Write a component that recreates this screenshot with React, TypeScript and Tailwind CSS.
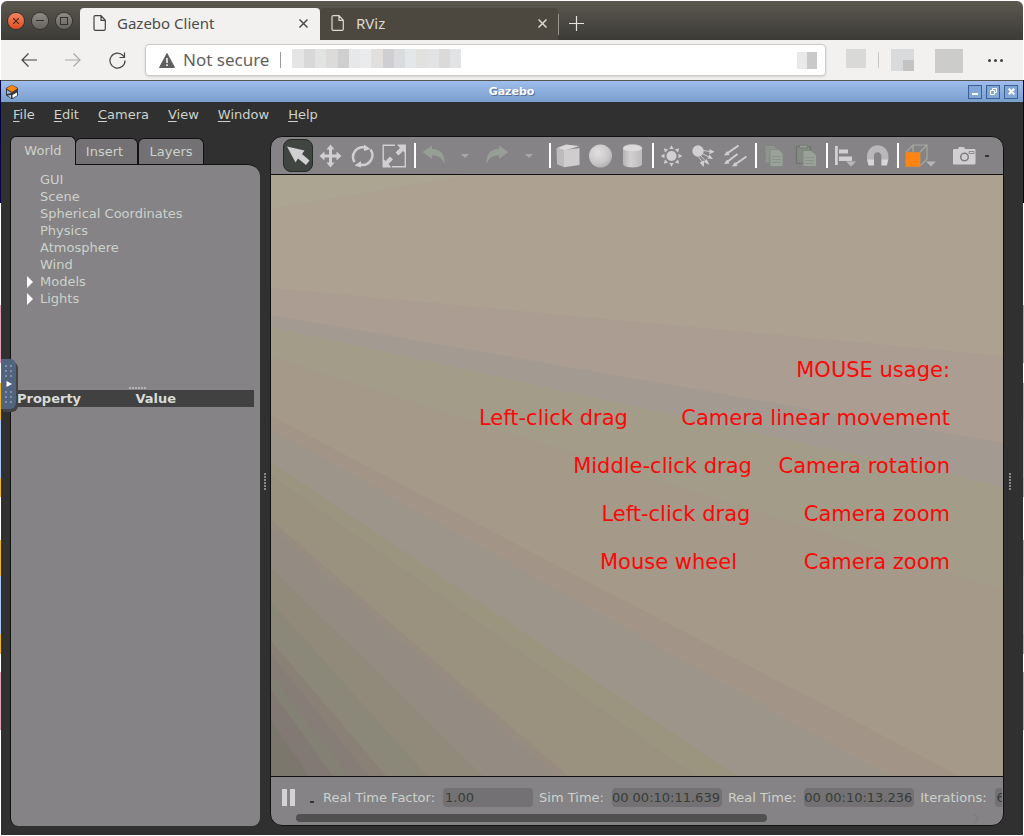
import type { ReactNode } from 'react';

const light = '#d2cfd2';
const faded = '#979e95';

function ToolButton({ label, active, wide, children }: { label: string; active?: boolean; wide?: boolean; children: ReactNode }) {
  return (
    <button
      type="button"
      aria-label={label}
      className={`flex h-full shrink-0 items-center ${wide ? 'w-10 pl-1' : 'w-8 justify-center'}`}
    >
      {active ? (
        <span className="flex h-[33px] w-[30px] items-center justify-center rounded-lg border border-[#252b25] bg-[#414541]">{children}</span>
      ) : (
        children
      )}
    </button>
  );
}

function Separator() {
  return (
    <span className="flex h-full w-[7px] shrink-0 items-center pl-1">
      <span className="h-[25px] w-0.5 shrink-0 bg-white" />
    </span>
  );
}

function Icon({ children, w = 24 }: { children: ReactNode; w?: number }) {
  return (
    <svg width={w} height="24" viewBox={`0 0 ${w} 24`} fill="none" className="shrink-0" aria-hidden="true">
      {children}
    </svg>
  );
}

function Toolbar() {
  return (
    <div className="flex h-[37px] shrink-0 items-center overflow-hidden pl-[11px]" role="toolbar" aria-label="Scene tools">
      <ToolButton label="Select" active>
        <Icon>
          <path d="M1 2.500 18.500 6.500l-2.500 3.500 7.500 6.500-3.500 4.500-8-6.500-2.500 4z" fill={light} />
        </Icon>
      </ToolButton>
      <ToolButton label="Translate">
        <Icon>
          <path d="M12.500.5 16.500 5.500h-2.500v5h4.500V7.500l5 4.500-5 4.500v-3H14v5h2.500l-4 5-4-5H11v-5H6.500v3l-5-4.500 5-4.500v3H11v-5H8.500z" fill={light} />
        </Icon>
      </ToolButton>
      <ToolButton label="Rotate">
        <Icon>
          <path d="M4.500 18A9.700 9.700 0 0 1 15 3.500M20.500 5.500A9.700 9.700 0 0 1 10 20.500" stroke={light} strokeWidth="2.400" />
          <path d="M14 .5v6.500l6.500-2zM11 17v6.500l-6.500-2z" fill={light} />
        </Icon>
      </ToolButton>
      <ToolButton label="Scale">
        <Icon>
          <path d="M13 1.200H1.200V15M23.300 9v13.800H10" stroke={light} strokeWidth="1.400" />
          <path d="M24 .5v9.500l-3-3-4.500 4.500-3-3L18 4l-3-3.500zM.5 23.500V14l3 3L8 12.500l3 3L6.500 20l3 3.500z" fill={light} />
        </Icon>
      </ToolButton>
      <Separator />
      <ToolButton label="Undo">
        <Icon>
          <path d="M1.500 8 11 1.500V5c9 0 13 5.500 12.500 15C21 14 18 11.500 11 11.500V15z" fill={faded} />
        </Icon>
      </ToolButton>
      <ToolButton label="Undo history">
        <svg width="8" height="4" viewBox="0 0 8 4" aria-hidden="true"><path d="M0 0h8L4 4z" fill="#a9a9a9" /></svg>
      </ToolButton>
      <ToolButton label="Redo">
        <Icon>
          <path d="M23.500 8 14 1.500V5C5 5 1 10.500 1.500 20 4 14 7 11.500 14 11.500V15z" fill={faded} />
        </Icon>
      </ToolButton>
      <ToolButton label="Redo history">
        <svg width="8" height="4" viewBox="0 0 8 4" aria-hidden="true"><path d="M0 0h8L4 4z" fill="#a9a9a9" /></svg>
      </ToolButton>
      <Separator />
      <ToolButton label="Box">
        <Icon>
          <path d="M1 4 10 .5l13.500 1.500L9 6.500z" fill="#dad8d9" />
          <path d="M.5 4 8 6v17.300l-7-3z" fill="#bdbbbc" />
          <path d="M8 6 23.500 4v17L8 23.300z" fill="#cfcdce" />
        </Icon>
      </ToolButton>
      <ToolButton label="Sphere">
        <Icon>
          <defs>
            <radialGradient id="ball" cx="0.4" cy="0.35" r="0.65">
              <stop offset="0" stopColor="#e2e0e1" />
              <stop offset="0.7" stopColor="#cbc8ca" />
              <stop offset="1" stopColor="#b4b2b3" />
            </radialGradient>
          </defs>
          <circle cx="12.500" cy="12" r="11.500" fill="url(#ball)" />
        </Icon>
      </ToolButton>
      <ToolButton label="Cylinder">
        <Icon>
          <defs>
            <linearGradient id="tube">
              <stop offset="0" stopColor="#b6b4b5" />
              <stop offset="0.4" stopColor="#d2d0d1" />
              <stop offset="1" stopColor="#bcbabb" />
            </linearGradient>
          </defs>
          <path d="M3 4v16c0 4.500 19 4.500 19 0V4z" fill="url(#tube)" />
          <ellipse cx="12.500" cy="4.200" rx="9.500" ry="3.700" fill="#dddbdc" stroke="#c2c0c1" strokeWidth=".6" />
        </Icon>
      </ToolButton>
      <Separator />
      <ToolButton label="Point light">
        <Icon>
          <circle cx="12.500" cy="12" r="5" fill={light} />
          {[0, 45, 90, 135, 180, 225, 270, 315].map((a) => (
            <path key={a} d="M10.300 5h4.400L12.500 1.200z" fill={light} transform={`rotate(${a} 12.500 12)`} />
          ))}
        </Icon>
      </ToolButton>
      <ToolButton label="Spot light">
        <Icon>
          <circle cx="7" cy="7" r="5.700" fill={light} />
          <path d="m12 6.500 7 1M11 9.500l7 3.500M9 11l6 6.500M7 12l5 7" stroke={light} strokeWidth=".9" />
          <path d="m18.500 5 5 2.800-5 2.400zM18.500 10.500l3.500 4.500-5.500-.5zM15.800 15l2.500 6-5.300-3zM13.200 16.500l-.5 6.500-4-4.500z" fill={light} />
        </Icon>
      </ToolButton>
      <ToolButton label="Directional light">
        <Icon>
          <path d="M15.500 1.500 4 9.500M14.500 10 4 18M23.500 12.500 12 20.500" stroke={light} strokeWidth="2" />
          <path d="m1 11.500 3-4.500 2.500 4zM1 20l3-4.500 2.500 4zM9 22.500l3-4.500 2.500 4z" fill={light} />
        </Icon>
      </ToolButton>
      <Separator />
      <ToolButton label="Copy">
        <Icon>
          <path d="M3 1.500h9l4 4V19H3z" fill="#8f958e" stroke="#7f867e" strokeWidth=".8" />
          <path d="M8 5.500h9l4 4V22.500H8z" fill="#9aa199" stroke="#7f867e" strokeWidth=".8" />
          <path d="M10 12.500h9M10 15.500h9M10 18.500h9" stroke="#8b928a" />
        </Icon>
      </ToolButton>
      <ToolButton label="Paste">
        <Icon>
          <path d="M2.500 2.500h14v17h-14z" fill="#858983" stroke="#6c736b" strokeWidth="1.200" />
          <path d="M5.500 4V1.200h8V4z" fill="#949b93" stroke="#727971" strokeWidth=".8" />
          <path d="M9 6.500h8l5.500 4.500V22.500H9z" fill="#9aa199" stroke="#7f867e" strokeWidth=".8" />
          <path d="M11 13.500h9M11 16.500h9M11 19.500h9" stroke="#8b928a" />
        </Icon>
      </ToolButton>
      <Separator />
      <ToolButton label="Align">
        <Icon>
          <path d="M2 2h2.800v19H2zM6 5.500h9v4H6zM6 12.500h13v4.500H6z" fill={light} />
          <path d="M13 17.500h10l-5 5z" fill="#bab8ba" />
        </Icon>
      </ToolButton>
      <ToolButton label="Snap">
        <Icon>
          <path d="M5.500 16v-4a7.200 7.200 0 0 1 14.400 0v4" stroke="#b9b7b9" strokeWidth="7" />
          <path d="M2 15.500h7v6H3.500zM16.400 15.500h7l-1.500 6h-5.500z" fill="#d8d6d8" />
        </Icon>
      </ToolButton>
      <Separator />
      <ToolButton label="View angle" wide>
        <Icon w={34}>
          <path d="M2 8 9 1h14v14l-7 7M23 1l-7 7M9 1v7" stroke="#a3aaa1" strokeWidth="1.200" />
          <path d="M1.500 8h15v15h-15z" fill="#ff8412" stroke="#8f8f88" strokeWidth=".6" />
          <path d="M22 17.500h10l-5 5z" fill="#b8b6b8" />
        </Icon>
      </ToolButton>
      <span className="w-2 shrink-0" />
      <ToolButton label="Screenshot">
        <Icon>
          <path d="M2 5h4l1-2h5l1 2h9.500q1 0 1 1v13.500q0 1-1 1H2q-1 0-1-1V6q0-1 1-1z" fill={light} />
          <circle cx="12.500" cy="13" r="3.800" stroke="#7e807e" strokeWidth="1.500" />
          <path d="M17 7.500h5v2h-5z" stroke="#868886" strokeWidth=".9" />
        </Icon>
      </ToolButton>
      <span className="ml-[5px] h-0.5 w-1 shrink-0 bg-[#353535]" />
    </div>
  );
}

const bands: [string, string][] = [
  ['0,113 732,181 732,601 0,601', '#ab9d91'],
  ['0,140 732,268 732,601 0,601', '#a39b91'],
  ['0,152 732,312 732,601 0,601', '#a39c89'],
  ['0,182 732,415 732,601 0,601', '#a5998a'],
  ['0,241 689,601 0,601', '#a39488'],
  ['0,254 618,601 0,601', '#9d958a'],
  ['0,287 466,601 0,601', '#9b9580'],
  ['0,300 425,601 0,601', '#9a917f'],
  ['0,345 297,601 0,601', '#988c80'],
  ['0,353 285,601 0,601', '#948c82'],
  ['0,392 212,601 0,601', '#918979'],
  ['0,427 156,601 0,601', '#8b8779'],
  ['0,466 115,601 0,601', '#8a8076'],
  ['0,480 98,601 0,601', '#877d77'],
  ['0,500 78,601 0,601', '#828173'],
  ['0,515 62,601 0,601', '#827974'],
  ['0,545 38,601 0,601', '#7b776d'],
];

const usage = [
  'MOUSE usage:',
  'Left-click drag        Camera linear movement',
  'Middle-click drag    Camera rotation',
  'Left-click drag        Camera zoom',
  'Mouse wheel          Camera zoom',
];

function Scene() {
  return (
    <div className="relative min-h-[601px] flex-1 overflow-hidden border-y border-[#111] bg-[#ada192]">
      <svg className="absolute inset-0 h-full w-full" viewBox="0 0 732 601" preserveAspectRatio="none" aria-hidden="true">
        <polygon points="0,0 197,0 0,34" fill="#aba591" />
        {bands.map(([points, fill]) => (
          <polygon key={points} points={points} fill={fill} />
        ))}
      </svg>
      <div className="relative flex flex-col items-end pt-[171px] pr-[53px] text-[21px] leading-[48px] text-[#fb0808]">
        {usage.map((line) => (
          <p key={line} className="whitespace-pre">{line}</p>
        ))}
      </div>
    </div>
  );
}

function Reading({ id, label, value, width }: { id: string; label: string; value: string; width: string }) {
  return (
    <div className="flex shrink-0 items-center">
      <label htmlFor={id} className="mr-2 whitespace-nowrap">{label}</label>
      <input id={id} readOnly defaultValue={value} className={`mr-1.5 h-[19px] rounded bg-[#737173] text-[#353d36] outline-none ${width}`} />
    </div>
  );
}

function StatusBar() {
  return (
    <div className="flex h-12 shrink-0 flex-col overflow-hidden pr-px text-[13px]">
      <div className="mt-[11px] flex h-[19px] items-center overflow-hidden">
        <button type="button" aria-label="Pause" className="ml-[11px] flex shrink-0 gap-[3px]">
          <span className="h-[17px] w-[5px] bg-[#d4d2d4]" />
          <span className="h-[17px] w-[5px] bg-[#d4d2d4]" />
        </button>
        <span className="mt-2 mr-[9px] ml-[15px] h-0.5 w-1 shrink-0 bg-[#353535]" />
        <Reading id="rtf" label="Real Time Factor:" value="1.00" width="w-[90px] pl-0.5" />
        <Reading id="sim" label="Sim Time:" value="00 00:10:11.639" width="w-[110px]" />
        <Reading id="real" label="Real Time:" value="00 00:10:13.236" width="w-[110px]" />
        <Reading id="iter" label="Iterations:" value="611639" width="w-[90px] pl-0.5" />
      </div>
      <div className="mt-1.5 flex h-2.5 items-center justify-between pr-6 pl-[25px]">
        <span className="h-2 w-[69%] rounded-full bg-[#505050]" />
        <svg width="5" height="9" viewBox="0 0 5 9" fill="none" aria-hidden="true"><path d="M0 .5Q4.500 1 4.500 4.500T1 8.500" stroke="#757d72" /></svg>
      </div>
    </div>
  );
}

function Grip() {
  return (
    <span className="flex flex-col gap-px">
      {[0, 1, 2, 3, 4, 5].map((i) => (
        <span key={i} className="h-0.5 w-0.5 bg-[#8a8a8a]" />
      ))}
    </span>
  );
}

function SidePanel() {
  const items = ['GUI', 'Scene', 'Spherical Coordinates', 'Physics', 'Atmosphere', 'Wind', 'Models', 'Lights'];
  return (
    <aside className="flex w-[250px] shrink-0 flex-col text-[13px]">
      <div className="flex h-7 items-end" role="tablist">
        <button type="button" role="tab" aria-selected="true" className="relative z-10 -mb-px h-[29px] w-[66px] shrink-0 rounded-t-md border border-b-0 border-[#111] bg-[#858385]">World</button>
        <button type="button" role="tab" aria-selected="false" className="-ml-px h-[26px] w-[63px] rounded-t-md border border-b-0 border-[#111] bg-[#737173] pr-1">Insert</button>
        <button type="button" role="tab" aria-selected="false" className="h-[26px] w-[66px] rounded-t-md border border-b-0 border-[#111] bg-[#737173]">Layers</button>
      </div>
      <div className="flex flex-1 flex-col rounded-tr-xl rounded-b-lg border border-r-0 border-b-0 border-[#111] bg-[#858385]">
        <ul className="min-h-[222px] pt-1.5">
          {items.map((item) => (
            <li key={item} className="flex h-[17px] items-center">
              <span className="flex w-[29px] pl-4">
                {(item === 'Models' || item === 'Lights') && (
                  <svg width="6" height="12" viewBox="0 0 6 12" aria-hidden="true"><path d="M0 0 6 6 0 12z" fill="#fff" /></svg>
                )}
              </span>
              <button type="button" className="leading-[17px]">{item}</button>
            </li>
          ))}
        </ul>
        <div className="flex justify-center gap-px pb-px pl-1">
          {[0, 1, 2, 3, 4, 5].map((i) => (
            <span key={i} className="h-0.5 w-0.5 bg-[#b5b5b5]" />
          ))}
        </div>
        <div className="pr-1.5 pl-1.5">
          <table className="w-full table-fixed bg-[#414141] text-left leading-[17px] text-[#d8dcd8]">
            <thead>
              <tr>
                <th scope="col" className="w-1/2 p-0 font-bold">Property</th>
                <th scope="col" className="w-1/2 p-0 font-bold">Value</th>
              </tr>
            </thead>
          </table>
        </div>
      </div>
    </aside>
  );
}

function PageIcon({ color }: { color: string }) {
  return (
    <svg width="13" height="16" viewBox="0 0 13 16" fill="none" className="shrink-0" aria-hidden="true">
      <path d="M1 2Q1 .7 2.300.7H8l4.300 4.600V14q0 1.300-1.300 1.300H2.300Q1 15.300 1 14zM8 .7V5.300h4.300" stroke={color} strokeWidth="1.200" />
    </svg>
  );
}

function CloseIcon({ color }: { color: string }) {
  return (
    <svg width="9" height="9" viewBox="0 0 9 9" aria-hidden="true"><path d="m.5.5 8 8m0-8-8 8" stroke={color} strokeWidth="1.500" /></svg>
  );
}

function Browser() {
  return (
    <header className="font-['Noto_Sans','Open_Sans',sans-serif]">
      <div className="flex h-[39px] items-end rounded-t-md bg-linear-to-b from-[#5b584e] to-[#3c3b37]">
        <div className="flex h-full shrink-0 items-center gap-2 px-[7px] pr-2">
          <button type="button" aria-label="Close window" className="flex size-4 items-center justify-center rounded-full bg-linear-to-b from-[#f5845f] to-[#df4c1d] ring-1 ring-[#33322d]">
            <svg width="6" height="6" viewBox="0 0 6 6" aria-hidden="true"><path d="m0 0 6 6m0-6-6 6" stroke="#4a2a1e" strokeWidth="1.200" /></svg>
          </button>
          <button type="button" aria-label="Minimise window" className="flex size-4 items-center justify-center rounded-full bg-linear-to-b from-[#8d8b84] to-[#66645d] ring-1 ring-[#33322d]">
            <span className="h-px w-2 bg-[#33322d]" />
          </button>
          <button type="button" aria-label="Maximise window" className="flex size-4 items-center justify-center rounded-full bg-linear-to-b from-[#8d8b84] to-[#66645d] ring-1 ring-[#33322d]">
            <span className="size-2 border border-[#33322d]" />
          </button>
        </div>
        <div className="flex h-8 w-[240px] shrink-0 items-center rounded-t bg-[#f2f1f0] pr-3 pb-0.5 pl-[13px] text-[#4c4c4c]">
          <PageIcon color="#444" />
          <span className="ml-[11px] flex-1 text-[15px]">Gazebo Client</span>
          <button type="button" aria-label="Close Gazebo Client"><CloseIcon color="#4c4c4c" /></button>
        </div>
        <div className="flex h-8 w-[238px] shrink-0 items-center rounded-t bg-[#4c4840] pr-[11px] pb-0.5 pl-[11px] text-[#dedad2]">
          <PageIcon color="#dedad2" />
          <span className="ml-3 flex-1 text-[15px]">RViz</span>
          <button type="button" aria-label="Close RViz"><CloseIcon color="#dedad2" /></button>
        </div>
        <span className="mb-[5px] h-[21px] w-px bg-[#99968e]" />
        <button type="button" aria-label="New tab" className="mb-[9px] ml-2.5">
          <svg width="15" height="15" viewBox="0 0 15 15" aria-hidden="true"><path d="M7.500 0v15M0 7.500h15" stroke="#e4e1da" strokeWidth="1.200" /></svg>
        </button>
      </div>
      <div className="flex h-10 items-center bg-[#f2f1f0] pl-5">
        <button type="button" aria-label="Back" className="mr-7">
          <svg width="16" height="14" viewBox="0 0 16 14" fill="none" aria-hidden="true"><path d="M16 7H1M7.500.5 1 7l6.500 6.500" stroke="#444" strokeWidth="1.200" /></svg>
        </button>
        <button type="button" aria-label="Forward" className="mr-7">
          <svg width="16" height="14" viewBox="0 0 16 14" fill="none" aria-hidden="true"><path d="M0 7h15M8.500.5 15 7l-6.500 6.500" stroke="#aaa" strokeWidth="1.200" /></svg>
        </button>
        <button type="button" aria-label="Reload" className="mr-[19px]">
          <svg width="17" height="17" viewBox="0 0 17 17" fill="none" aria-hidden="true"><path d="M16 8.500A7.500 7.500 0 1 1 14 3.500L15.500 5M15.500.5V5.500H10.500" stroke="#444" strokeWidth="1.200" /></svg>
        </button>
        <div className="flex h-8 flex-1 items-center rounded border border-[#cdcbc9] bg-white pr-2 pl-[13px] shadow-sm">
          <svg width="16" height="15" viewBox="0 0 16 15" aria-hidden="true">
            <path d="M8 .5 15.500 14.500H.5z" fill="#5f5f5f" stroke="#5f5f5f" strokeLinejoin="round" />
            <path d="M8 5v5M8 11.200v1.800" stroke="#fff" strokeWidth="1.500" />
          </svg>
          <span className="ml-2 text-[17px] text-[#5f5f5f]">Not secure</span>
          <span className="ml-[11px] h-4 w-px bg-[#999]" />
          <div className="mb-[3px] ml-[11px] flex h-[19px] w-[169px]">
            <span className="flex-1 bg-[#e5e5e5]" /><span className="flex-1 bg-[#d8d8d9]" /><span className="flex-1 bg-[#e2e3e3]" /><span className="flex-1 bg-[#dddbd9]" /><span className="flex-1 bg-[#cfcfcf]" />
            <span className="flex-1 bg-[#e8e8e8]" /><span className="flex-1 bg-[#e9ebed]" /><span className="flex-1 bg-[#e1e0de]" /><span className="flex-1 bg-[#cfcfd1]" /><span className="flex-1 bg-[#dadbde]" />
            <span className="flex-1 bg-[#e4e7e7]" /><span className="flex-1 bg-[#e1e2df]" /><span className="flex-1 bg-[#e2e3e4]" /><span className="flex-1 bg-[#dcdad8]" /><span className="flex-1 bg-[#e2e3e5]" />
          </div>
          <span className="ml-auto h-[17px] w-2.5 bg-[#e9e9e9]" />
          <span className="h-[17px] w-2.5 bg-[#c9c9c9]" />
        </div>
        <span className="mb-1 ml-5 h-[19px] w-5 bg-[#d9d9d8]" />
        <span className="mb-px ml-3 h-4 w-px bg-[#c8c8c8]" />
        <div className="ml-3 grid h-[22px] w-[23px] grid-cols-2 bg-[#d9dadb]">
          <span className="col-start-2 row-start-2 bg-[#c4c3c2]" />
        </div>
        <span className="mt-0.5 ml-[21px] h-6 w-7 bg-[#cccccb]" />
        <button type="button" aria-label="Menu" className="mr-5 ml-[25px] flex gap-[3px]">
          <span className="size-[3px] rounded-full bg-[#444]" /><span className="size-[3px] rounded-full bg-[#444]" /><span className="size-[3px] rounded-full bg-[#444]" />
        </button>
      </div>
    </header>
  );
}

function TitleBar() {
  const box = 'flex size-3.5 items-center justify-center border border-[#3c5f94] bg-[#80a6d8]';
  return (
    <div className="flex h-[22px] items-center border-t border-[#55564f] bg-linear-to-b from-[#a0bdeb] to-[#789fce] pr-[5px] pl-1">
      <div className="flex flex-1">
        <svg width="14" height="16" viewBox="0 0 14 16" aria-hidden="true">
          <path d="M7 .7 13 4v7.500L7 15.300 1 11.500V4z" fill="#3a3a3a" />
          <path d="M7 1 12.500 4.500 7 8 1.500 4.500z" fill="#ff8412" />
          <path d="m2 6 4.500 3L2 10z" fill="#9fbce8" />
          <path d="M2.500 11.500 6 11v3z" fill="#b8ccee" />
          <path d="m7.500 11 4.500-2.500v3L7.500 14z" fill="#fff" />
        </svg>
      </div>
      <h1 className="pt-0.5 text-[11px] font-bold text-white [text-shadow:1px_1px_0_#54719c]">Gazebo</h1>
      <div className="flex flex-1 justify-end gap-1">
        <button type="button" aria-label="Minimise" className={box}><span className="mt-1 h-0.5 w-1.5 bg-white" /></button>
        <button type="button" aria-label="Restore" className={box}>
          <svg width="7" height="7" viewBox="0 0 7 7" fill="none" aria-hidden="true"><path d="M2.500 2V.5h4v4H5M.5 2.500h4v4h-4z" stroke="#fff" /></svg>
        </button>
        <button type="button" aria-label="Close" className={box}>
          <svg width="7" height="7" viewBox="0 0 7 7" aria-hidden="true"><path d="m.7.7 5.600 5.600m0-5.600L.7 6.300" stroke="#fff" strokeWidth="2.200" /></svg>
        </button>
      </div>
    </div>
  );
}

function DrawerHandle() {
  const dots = (
    <span className="grid grid-cols-2 gap-[3px]">
      {[0, 1, 2, 3, 4, 5].map((i) => (
        <span key={i} className="size-0.5 bg-[#8291a7]" />
      ))}
    </span>
  );
  return (
    <button type="button" aria-label="Open control bar" className="absolute top-[359px] left-px z-20 flex h-[50px] w-[15px] flex-col items-center justify-center gap-1 rounded-r-md bg-[#52637d] shadow-[2px_3px_0_#444446]">
      {dots}
      <svg width="6" height="6" viewBox="0 0 6 6" aria-hidden="true"><path d="M.5 0 6 3 .5 6z" fill="#fff" /></svg>
      {dots}
    </button>
  );
}

export default function App() {
  return (
    <div className="relative flex min-h-screen flex-col bg-[linear-gradient(#fff_80px,#000040_80px,#000040_203px,#fff_203px,#fff_305px,#e0a0b8_305px,#e0a0b8_363px,#fff_363px,#fff_383px,#f0b820_383px,#f0b820_420px,#a8c8f8_420px,#a8c8f8_478px,#f0b820_478px,#f0b820_497px,#fff_497px,#fff_540px,#f0b820_540px,#f0b820_576px,#a8c8f8_576px,#a8c8f8_634px,#f0b820_634px,#f0b820_654px,#fff_654px,#fff_672px,#e0a0b8_672px,#e0a0b8_730px,#fff_730px)] p-px font-['DejaVu_Sans',sans-serif]">
      <Browser />
      <TitleBar />
      <main className="flex flex-1 flex-col bg-[#303030] text-[#ccd2cc]">
        <nav className="flex h-[25px] shrink-0 items-center gap-[19px] pl-3 text-[13px]">
          {['File', 'Edit', 'Camera', 'View', 'Window', 'Help'].map((name) => (
            <button key={name} type="button">
              <span className="underline underline-offset-2">{name[0]}</span>
              {name.slice(1)}
            </button>
          ))}
        </nav>
        <div className="flex flex-1 pt-[9px] pb-[9px] pl-[9px]">
          <SidePanel />
          <div className="flex w-2.5 shrink-0 items-center justify-center"><Grip /></div>
          <section className="flex min-w-0 flex-1 flex-col overflow-hidden rounded-xl border border-[#111] bg-[#858385]" aria-label="3D view">
            <Toolbar />
            <Scene />
            <StatusBar />
          </section>
          <div className="flex w-[19px] shrink-0 items-center pl-[5px]"><Grip /></div>
        </div>
      </main>
      <DrawerHandle />
    </div>
  );
}
